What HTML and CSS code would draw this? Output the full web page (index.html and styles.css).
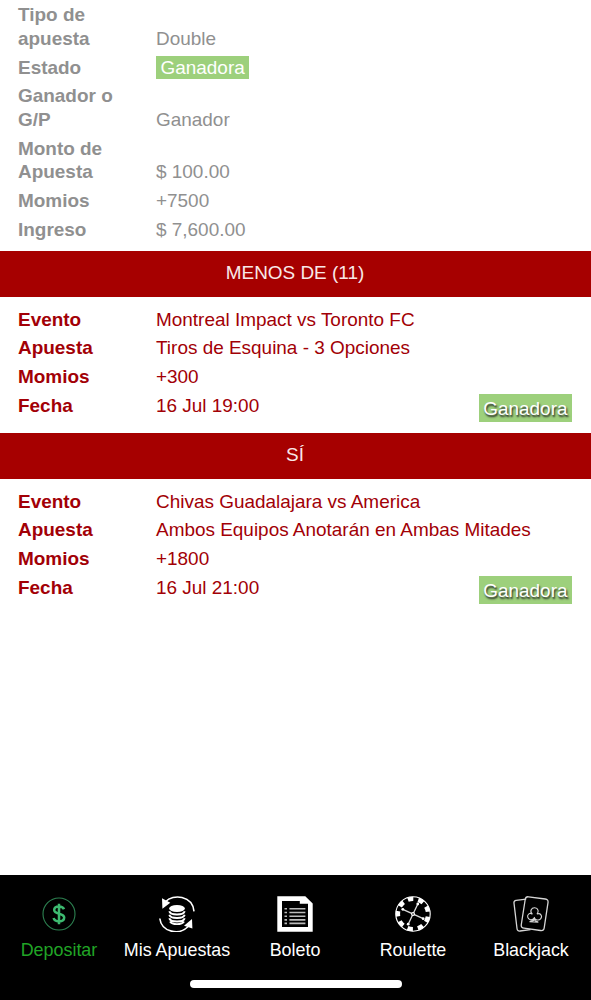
FILE: index.html
```html
<!DOCTYPE html>
<html lang="es">
<head>
    <meta charset="UTF-8">
    <meta name="viewport" content="width=device-width, initial-scale=1.0">
    <title>Mis Apuestas</title>

    <link rel="stylesheet" href="styles.css">
</head>
<body>
<main class="content">
    <section class="summary">
        <div class="row"><b>Tipo de apuesta</b><span>Double</span></div>
        <div class="row"><b>Estado</b><span><span class="status">Ganadora</span></span></div>
        <div class="row"><b>Ganador o G/P</b><span>Ganador</span></div>
        <div class="row"><b>Monto de Apuesta</b><span>$ 100.00</span></div>
        <div class="row"><b>Momios</b><span>+7500</span></div>
        <div class="row"><b>Ingreso</b><span>$ 7,600.00</span></div>
    </section>

    <h2>MENOS DE (11)</h2>
    <section class="event">
        <div class="row"><b>Evento</b><span>Montreal Impact vs Toronto FC</span></div>
        <div class="row"><b>Apuesta</b><span>Tiros de Esquina - 3 Opciones</span></div>
        <div class="row"><b>Momios</b><span>+300</span></div>
        <div class="row"><b>Fecha</b><span>16 Jul 19:00</span><span class="badge">Ganadora</span></div>
    </section>

    <h2>SÍ</h2>
    <section class="event">
        <div class="row"><b>Evento</b><span>Chivas Guadalajara vs America</span></div>
        <div class="row"><b>Apuesta</b><span>Ambos Equipos Anotarán en Ambas Mitades</span></div>
        <div class="row"><b>Momios</b><span>+1800</span></div>
        <div class="row"><b>Fecha</b><span>16 Jul 21:00</span><span class="badge">Ganadora</span></div>
    </section>
</main>

<footer>
    <nav>
        <a class="active">
            <svg viewBox="0 0 36 36" fill="none">
                <circle cx="18" cy="18" r="16" stroke="#2c8050" stroke-width="1.1"/>
                <path d="M23 13.3C22.3 11.4 20.6 10.5 18 10.5C15.2 10.5 13.2 11.8 13.2 14C13.2 19 23.2 16.4 23.2 21.6C23.2 24 21 25.4 18.1 25.4C15.2 25.4 13.2 24.2 12.6 22M18 7.7V28.2" stroke="#3dba70" stroke-width="2.5"/>
            </svg>
            <span>Depositar</span>
        </a>
        <a>
            <svg viewBox="0 0 36 36" fill="none" stroke="#fff">
                <path d="M6.5 5.8C14-2.5 33.5-.5 35 15.3M.8 22.5C2.6 36.5 20.5 39.5 29.2 30.5" stroke-width="1.6"/>
                <path d="M3 2.3L11.3 6.8L3.4 12.7ZM33 23L33.4 32.6L25 29.8Z" fill="#fff" stroke="none"/>
                <ellipse cx="18" cy="12.5" rx="7.9" ry="3.5" fill="#fff" stroke="none"/>
                <path d="M10.3 15.2C11.5 19.5 24.5 19.5 25.7 15.2M10.3 18.7C11.5 23 24.5 23 25.7 18.7M10.3 22.2C11.5 26.5 24.5 26.5 25.7 22.2M11 25.5C13 29 23 29 25 25.5" stroke-width="1.9"/>
            </svg>
            <span>Mis Apuestas</span>
        </a>
        <a>
            <svg viewBox="0 0 36 36">
                <path d="M.3.3H28.3L35.7 7.5V35.7H.3ZM5 5V31H31V7.8H22.8V5Z" fill="#fff" fill-rule="evenodd"/>
                <path d="M7.5 12.8H10M7.5 16.5H10M7.5 20.2H10M7.5 23.9H10M7.5 27.4H10M12.4 12.8H28.4M12.4 16.5H28.4M12.4 20.2H28.4M12.4 23.9H28.4M12.4 27.4H28.4" stroke="#bbb" stroke-width="1.6"/>
            </svg>
            <span>Boleto</span>
        </a>
        <a>
            <svg viewBox="0 0 36 36" fill="none" stroke="#fff">
                <circle cx="18" cy="18" r="17.2" stroke-width="1.1"/>
                <circle cx="18" cy="18" r="15.1" stroke-width="4.4" pathLength="90" stroke-dasharray="5.2 4.8" stroke-dashoffset="-2.6"/>
                <path d="M7.8 13.3L28.2 22.7M22.8 8L13.2 28.2" stroke="#ddd" stroke-width="1.3"/>
                <g fill="#fff" stroke="none">
                    <circle cx="7.8" cy="13.3" r="1.4"/>
                    <circle cx="28.2" cy="22.7" r="1.4"/>
                    <circle cx="22.8" cy="8" r="1.4"/>
                    <circle cx="13.2" cy="28.2" r="1.4"/>
                    <circle cx="18" cy="18" r="2"/>
                </g>
                <circle cx="18" cy="18" r=".8" fill="#000" stroke="none"/>
            </svg>
            <span>Roulette</span>
        </a>
        <a>
            <svg viewBox="0 0 36 36" fill="none" stroke="#d5d5d5" stroke-width="1.3">
                <path d="M13.2 3.2L3.1 4.4Q.7 4.7 1 7.2L4 32.5Q4.3 35.3 7 35L17.5 33.7"/>
                <path d="M15.5.8L32.2 3Q35.5 3.5 35 6.7L31.2 31.8Q30.7 35 27.5 34.5L11 32.2Q7.8 31.7 8.3 28.5L12.2 3.5Q12.7.4 15.5.8Z"/>
                <path d="M19.4 18.2C16.2 15.2 18.6 11.5 21.7 11.7C25.3 12 26.2 15.9 23.9 18.1C27.4 16.4 29.9 20.1 27.6 22.8C25.8 24.9 22.7 24.2 21.4 21.9C19.4 25 15.4 24.3 14.7 21.2C14 18.3 17 16.3 19.4 18.2ZM21.2 21.8L20.6 24.5L16.5 25.7L25.3 26.3L22 24.6L21.5 21.9" stroke-width="1.1"/>
            </svg>
            <span>Blackjack</span>
        </a>
    </nav>
    <div class="home-bar"></div>
</footer>
</body>
</html>
```
FILE: styles.css
```css
* {
    box-sizing: border-box;
}

body {
    margin: 0;
    height: 1000px;
    display: flex;
    flex-direction: column;
    overflow: hidden;
    background-color: white;
    font-family: "Liberation Sans", Arial, Helvetica, sans-serif;
    font-size: 18.95px;
    line-height: 23.7px;
}

.content {
    flex: 1;
}

.summary {
    height: 251px;
    padding: 0.7px 18px 0;
    color: #909090;
}

.event {
    height: 136px;
    padding: 8px 19px 0 18px;
    color: #a20006;
}

.row {
    display: flex;
    align-items: flex-end;
    padding: 2.5px 0;
}

.row b {
    flex: none;
    width: 138px;
    padding-right: 30px;
}

h2 {
    margin: 0;
    height: 46px;
    padding: 10px 1px 0 0;
    background-color: #a60000;
    color: #f8e8e8;
    font-size: 18.95px;
    font-weight: normal;
    text-align: center;
}

.status {
    display: inline-block;
    padding: 0 4.5px;
    background-color: #9dd07c;
    color: white;
}

.badge {
    height: 28px;
    margin: 0 0 -5px auto;
    padding: 3px 4.5px;
    background-color: #9dd07c;
    color: white;
    text-shadow: 1px 2px 2px #222;
}

footer {
    height: 125px;
    padding-top: 21px;
    background-color: black;
    color: white;
}

nav {
    display: grid;
    grid-template-columns: repeat(5, 1fr);
    padding-right: 1px;
    font-size: 17.9px;
}

nav a {
    display: flex;
    flex-direction: column;
    align-items: center;
    gap: 7px;
    white-space: nowrap;
}

nav svg {
    width: 36px;
    height: 36px;
}

nav .active {
    color: #20a526;
}

.home-bar {
    width: 212px;
    height: 8px;
    margin: 17px auto 0;
    border-radius: 4px;
    background-color: white;
}
```
